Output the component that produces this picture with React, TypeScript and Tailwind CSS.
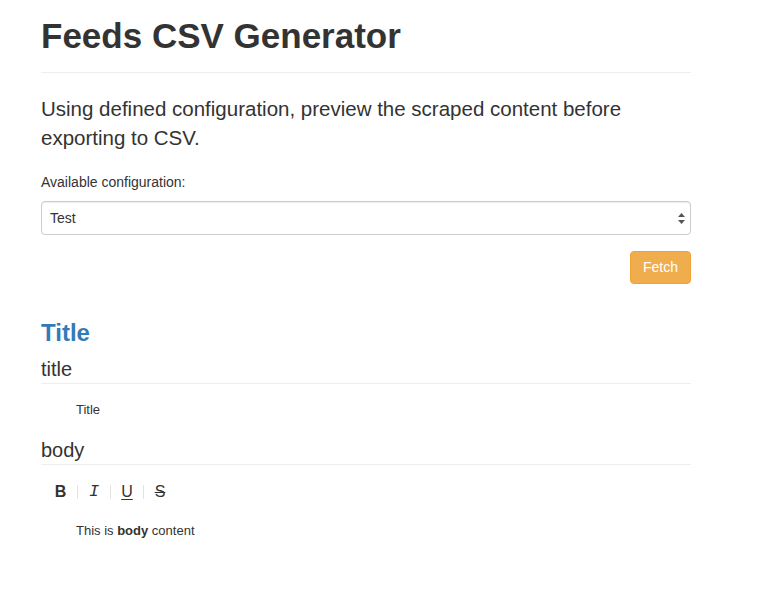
import React from "react";

export default function App() {
  return (
    <div className="min-h-[602px] w-[760px] bg-white text-[#333] font-['Liberation_Sans',Arial,sans-serif]">
      <div className="ml-[41px] w-[650px]">
        <div className="border-b border-[#eee] pt-[16px] pb-[16px]">
          <h1 className="text-[35px] leading-[40px] font-bold">Feeds CSV Generator</h1>
        </div>
        <p className="mt-[21px] text-[20.5px] leading-[29px] font-light">
          Using defined configuration, preview the scraped content before exporting to CSV.
        </p>
        <label className="mt-[20px] block text-[14px] leading-[20px]">Available configuration:</label>
        <div className="relative mt-[9px] h-[34px] rounded-[4px] border border-[#ccc] shadow-[inset_0_1px_1px_rgba(0,0,0,0.075)] flex items-center px-[8px]">
          <span className="text-[14px]">Test</span>
          <svg className="absolute right-[5px] top-[11px]" width="7" height="11" viewBox="0 0 7 11">
            <path d="M3.5 0 L7 4 L0 4 Z" fill="#555" />
            <path d="M0 7 L7 7 L3.5 11 Z" fill="#555" />
          </svg>
        </div>
        <div className="mt-[16px] flex justify-end">
          <button className="h-[33px] w-[61px] rounded-[4px] border border-[#eea236] bg-[#f0ad4e] text-[14px] text-white">
            Fetch
          </button>
        </div>
        <h3 className="mt-[36px] text-[24px] leading-[26px] font-bold text-[#337ab7]">Title</h3>
        <div className="mt-[11px] border-b border-[#eee] pb-[2px] text-[20px] leading-[24px]">title</div>
        <div className="mt-[18px] pl-[35px] text-[13px] leading-[16px]">Title</div>
        <div className="mt-[20px] border-b border-[#eee] pb-[2px] text-[20px] leading-[24px]">body</div>
        <div className="mt-[18px] flex items-center pl-[3px] text-[16px] leading-[18px] text-[#333]">
          <span className="w-[33px] text-center font-bold">B</span>
          <span className="h-[14px] w-px bg-[#e2e2e2]" />
          <span className="w-[32px] text-center italic font-['Liberation_Mono',monospace] text-[17px]">I</span>
          <span className="h-[14px] w-px bg-[#e2e2e2]" />
          <span className="w-[32px] text-center">
            <span className="underline underline-offset-2">U</span>
          </span>
          <span className="h-[14px] w-px bg-[#e2e2e2]" />
          <span className="w-[32px] text-center line-through">S</span>
        </div>
        <div className="mt-[22px] pl-[35px] text-[13px] leading-[16px]">
          This is <b>body</b> content
        </div>
      </div>
    </div>
  );
}
